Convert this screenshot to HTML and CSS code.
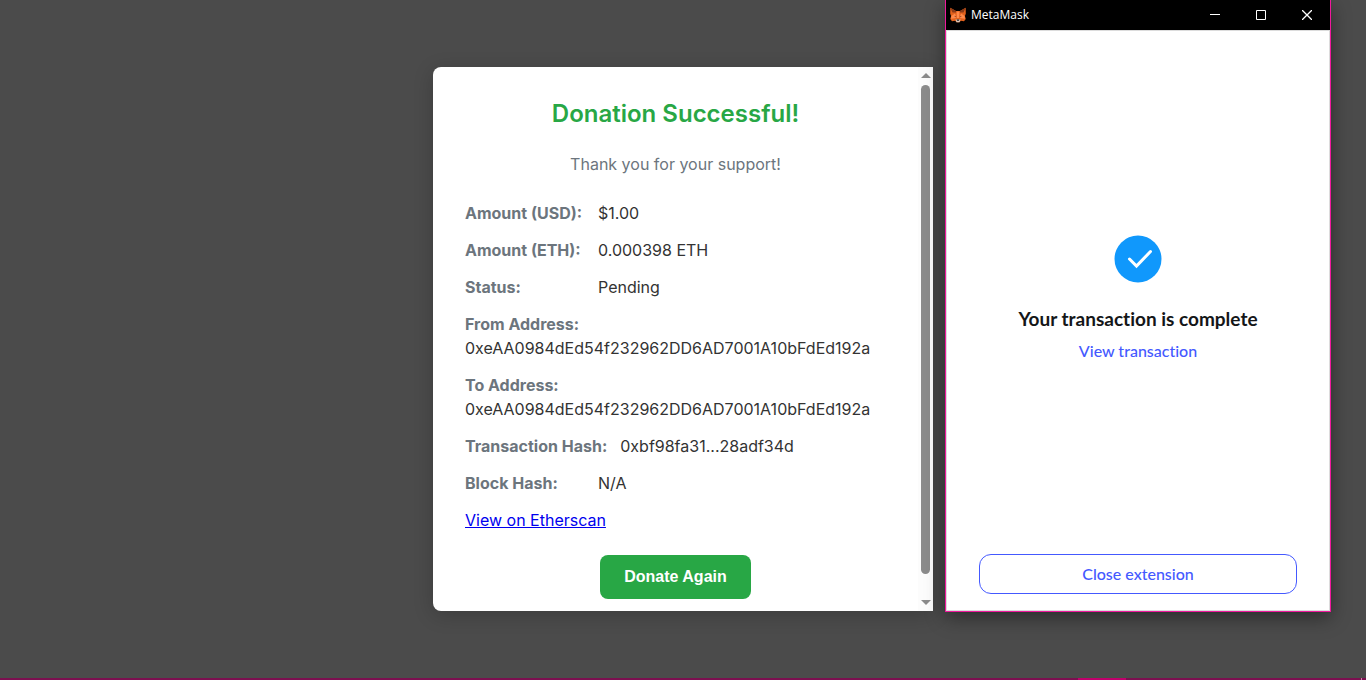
FILE: index.html
```
<!DOCTYPE html>
<html lang="en">
<head>
    <meta charset="UTF-8">
    <title>Donation Successful</title>
    <link rel="stylesheet" href="styles.css">
</head>
<body>
    <main class="overlay">
        <div class="modal">
            <div class="modal-content">
                <h2>Donation Successful!</h2>
                <p class="thanks">Thank you for your support!</p>

                <dl class="details">
                    <div class="detail-row"><dt>Amount (USD):</dt><dd>$1.00</dd></div>
                    <div class="detail-row"><dt>Amount (ETH):</dt><dd>0.000398 ETH</dd></div>
                    <div class="detail-row"><dt>Status:</dt><dd>Pending</dd></div>
                    <div class="detail-row"><dt>From Address:</dt><dd>0xeAA0984dEd54f232962DD6AD7001A10bFdEd192a</dd></div>
                    <div class="detail-row"><dt>To Address:</dt><dd>0xeAA0984dEd54f232962DD6AD7001A10bFdEd192a</dd></div>
                    <div class="detail-row"><dt>Transaction Hash:</dt><dd>0xbf98fa31...28adf34d</dd></div>
                    <div class="detail-row"><dt>Block Hash:</dt><dd>N/A</dd></div>
                </dl>
                <a class="explorer-link" href="#">View on Etherscan</a>

                <button type="button" class="btn">Donate Again</button>
            </div>

            <div class="scrollbar">
                <span class="arrow-up"></span>
                <span class="thumb"></span>
                <span class="arrow-down"></span>
            </div>
        </div>
    </main>

    <!-- wallet popup window -->
    <section class="wallet">
        <header class="titlebar">
            <svg class="fox" viewBox="0 0 16 16" width="16" height="16">
                <path fill="#e2611c" d="M.3.8L6 4h4L15.700.8l.1 6-.9 2.200.9 3-1.800 2.300-3.200-.5L9.500 15.200h-3L5.200 13.800l-3.200.5L.2 12l.9-3-.9-2.200z"/>
                <path fill="#8b3a17" d="M.3.8L6 4l.5 1.500L2.500 5.500zM15.700.8L10 4l-.5 1.500 4-.0z"/>
                <path fill="#ff8a4b" d="M1.400 9L5 6.500 6.500 11l-5.500.8zM14.600 9L11 6.500 9.500 11l5.500.8zM6.500 4.500h3L9 11H7z"/>
                <path fill="#5a2a1c" d="M4 8.800l2 .6.200 1.200zM12 8.800l-2 .6-.2 1.200z"/>
                <path fill="#d9c8bd" d="M5.500 12.500h5l-1 2.700h-3z"/>
                <path fill="#222" d="M6.700 12.500h2.600l-.3 1.300H7z"/>
            </svg>
            <span class="wallet-name">MetaMask</span>
            <button type="button" class="win-btn" aria-label="Minimize">
                <svg viewBox="0 0 10 10" width="10" height="10"><path d="M0 4.500h10"/></svg>
            </button>
            <button type="button" class="win-btn" aria-label="Maximize">
                <svg viewBox="0 0 10 10" width="10" height="10"><path d="M.5.5h9v9h-9z"/></svg>
            </button>
            <button type="button" class="win-btn" aria-label="Close">
                <svg viewBox="0 0 10 10" width="10" height="10"><path d="M0 0l10 10M10 0L0 10" stroke-width="1.300"/></svg>
            </button>
        </header>

        <div class="wallet-body">
            <div class="wallet-status">
                <svg class="check" viewBox="0 0 48 48" width="48" height="48">
                    <circle cx="24" cy="24" r="23.500" fill="#1098fc"/>
                    <path d="M15.500 24l7 7 14-14.500" fill="none" stroke="#fff" stroke-width="3" stroke-linecap="round"/>
                </svg>
                <h3>Your transaction is complete</h3>
                <a href="#">View transaction</a>
            </div>
            <button type="button" class="close-btn">Close extension</button>
        </div>
    </section>

    <footer class="taskbar">
        <span class="task-active"></span>
        <span class="task-edge"></span>
    </footer>
</body>
</html>
```
FILE: styles.css
```
* {
    box-sizing: border-box;
}
body {
    margin: 0;
    min-height: 100vh;
    display: flex;
    flex-direction: column;
    background-color: #4b4b4b;
    font-family: Inter, sans-serif;
    font-size: 16px;
    line-height: 24px;
    color: #333;
}
.overlay {
    flex: 1;
    display: flex;
    align-items: center;
    justify-content: center;
}

/* donation result */
.modal {
    display: flex;
    width: 100%;
    max-width: 500px;
    background-color: #fff;
    border-radius: 8px 0 0 8px;
    box-shadow: 0 4px 20px rgba(0, 0, 0, 0.2);
}
.modal-content {
    flex: 1;
    padding: 32px 32px 12px;
}
.modal h2 {
    margin: 0 0 24px;
    font-size: 24px;
    line-height: 29px;
    font-weight: 600;
    text-align: center;
    color: #28a745;
}
.thanks {
    margin: 0 0 25px;
    text-align: center;
    color: #6c757d;
}
.details {
    margin: 0;
}
.detail-row {
    display: flex;
    flex-wrap: wrap;
    column-gap: 13px;
    margin-bottom: 13px;
}
.detail-row dt {
    min-width: 120px;
    font-weight: 700;
    color: #6c757d;
}
.detail-row dd {
    margin: 0;
}
.explorer-link {
    color: #0000ee;
}
.btn {
    display: block;
    margin: 23px auto 0;
    padding: 10px 24px;
    border: none;
    border-radius: 8px;
    background-color: #28a745;
    font: bold 16px/24px "Liberation Sans", Arial, sans-serif;
    color: #fff;
    cursor: pointer;
}
.scrollbar {
    display: flex;
    flex-direction: column;
    align-items: center;
    width: 15px;
    padding: 6px 0;
    background-color: #fcfcfc;
}
.arrow-up,
.arrow-down {
    border: 5px solid transparent;
}
.arrow-up {
    border-top: none;
    border-bottom-color: #8b8b8b;
}
.arrow-down {
    border-bottom: none;
    border-top-color: #8b8b8b;
}
.thumb {
    flex: 1;
    width: 9px;
    margin: 7px 0 26px;
    border-radius: 5px;
    background-color: #8b8b8b;
}

/* wallet popup */
.wallet {
    position: absolute;
    top: 0;
    right: 35px;
    display: flex;
    flex-direction: column;
    width: 386px;
    height: 90vh;
    border: 1px solid #f0189c;
    border-top: none;
    background-color: #fff;
    box-shadow: 0 6px 18px rgba(0, 0, 0, 0.4);
    font-family: Lato, sans-serif;
    font-variant-ligatures: none;
}
.titlebar {
    display: flex;
    align-items: center;
    height: 30px;
    padding-left: 4px;
    background-color: #000;
    color: #fff;
}
.wallet-name {
    flex: 1;
    margin-left: 5px;
    font-family: "Open Sans", sans-serif;
    font-size: 12px;
}
.win-btn {
    display: flex;
    align-items: center;
    justify-content: center;
    width: 46px;
    height: 30px;
    padding: 0;
    border: none;
    background: none;
}
.win-btn path {
    fill: none;
    stroke: #fff;
}
.wallet-body {
    flex: 1;
    display: flex;
    flex-direction: column;
    padding: 12px 32px 16px;
    border: 1px solid #dcdcdc;
}
.wallet-status {
    flex: 1;
    display: flex;
    flex-direction: column;
    align-items: center;
    justify-content: center;
}
.wallet-status h3 {
    margin: 24px 0 8px;
    font-size: 19px;
    font-weight: 700;
    color: #141618;
}
.wallet-status a {
    font-weight: 500;
    color: #4459ff;
    text-decoration: none;
}
.close-btn {
    height: 40px;
    border: 1px solid #4459ff;
    border-radius: 12px;
    background-color: #fff;
    font: 500 16px/24px Lato, sans-serif;
    font-variant-ligatures: none;
    color: #4459ff;
}

.taskbar {
    display: flex;
    justify-content: flex-end;
    height: 2px;
    background-color: #7c0f50;
}
.task-active {
    width: 48px;
    margin-right: 235px;
    background-color: #c0006c;
}
.task-edge {
    width: 1px;
    margin-right: 4px;
    background-color: #c48aa8;
}
```
